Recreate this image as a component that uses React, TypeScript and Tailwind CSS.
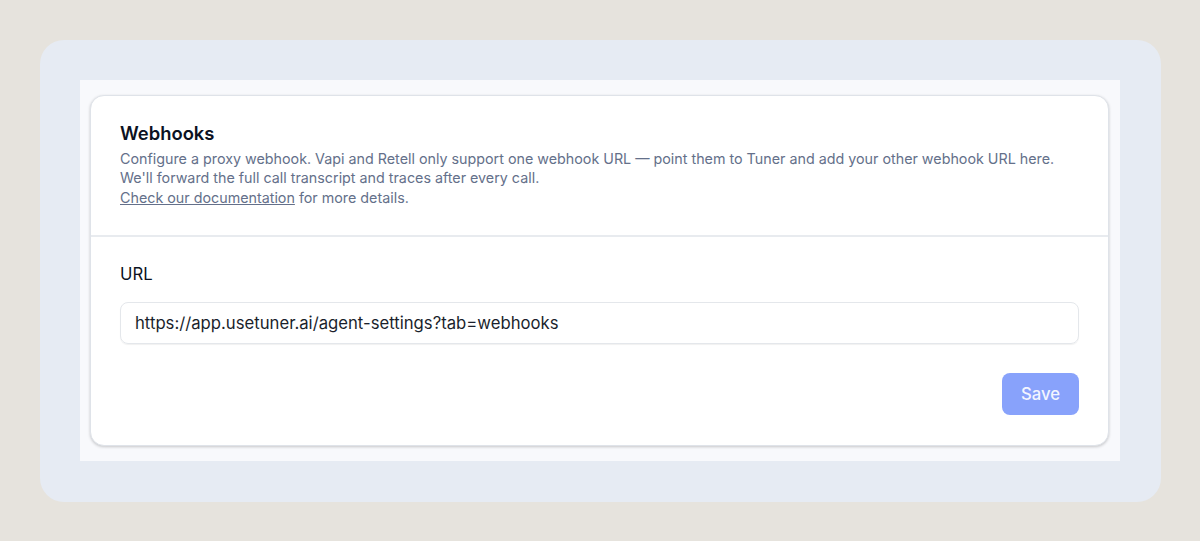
export default function App() {
  return (
    <div className="h-[541px] w-[1200px] bg-[#e6e3dd] pl-10 pt-10 font-['Inter',sans-serif]">
      <div className="w-[1121px] h-[462px] rounded-[24px] bg-[#e6ebf3] pl-10 pr-[41px] pt-10 pb-[41px]">
        <div className="h-full w-full bg-[#f8f9fc] pl-[10px] pr-[11px] pt-[15px]">
          <div className="h-[351px] rounded-[14px] border border-[#dfe3e9] bg-white shadow-[0_1px_3px_rgba(0,0,0,0.2)] flex flex-col">
            <div className="h-[141px] border-b-2 border-[#e8ebef] px-[29px] pt-[24px]">
              <h2 className="text-[18.4px] leading-[26px] font-semibold text-[#0c1222]">Webhooks</h2>
              <p className="mt-[3px] text-[14.3px] leading-[19.3px] text-[#64708a]">
                Configure a proxy webhook. Vapi and Retell only support one webhook URL — point them to Tuner and add your other webhook URL here.
                <br />
                We'll forward the full call transcript and traces after every call.
                <br />
                <span className="underline">Check our documentation</span> for more details.
              </p>
            </div>
            <div className="flex flex-1 flex-col px-[29px] pt-[26px]">
              <label className="text-[16.7px] leading-[22px] font-normal text-[#0c1222]">URL</label>
              <div className="mt-[17px] flex h-[42px] items-center rounded-[8px] border border-[#e4e7eb] shadow-[0_1px_1px_rgba(0,0,0,0.06)] pl-[14px] pt-[1px] text-[16.7px] text-[#1a1f2c]">
                https://app.usetuner.ai/agent-settings?tab=webhooks
              </div>
              <div className="mt-[29px] flex justify-end">
                <button className="h-[42px] w-[77px] rounded-[8px] bg-[#88a2fb] pt-[2px] text-[16.7px] font-medium text-[#f3f5ff]">Save</button>
              </div>
            </div>
          </div>
        </div>
      </div>
    </div>
  );
}
